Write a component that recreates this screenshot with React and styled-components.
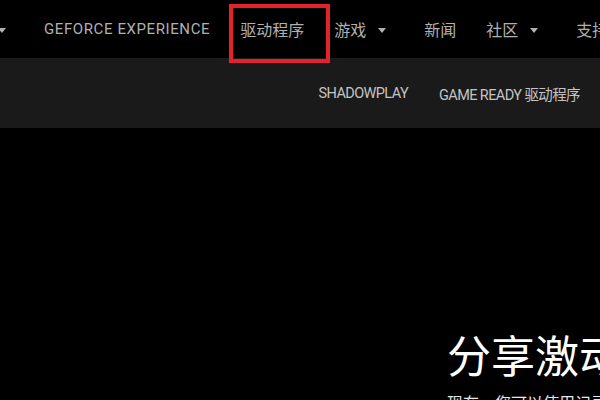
import React from 'react';
import styled, { createGlobalStyle } from 'styled-components';

const Global = createGlobalStyle`
  html, body {
    margin: 0;
    padding: 0;
    background: #000;
    overflow: hidden;
  }
  body {
    font-family: Roboto, "Noto Sans CJK SC", sans-serif;
  }
`;

const Page = styled.div`
  width: 600px;
  height: 400px;
  background: #000;
  overflow: hidden;
`;

const TopNav = styled.nav`
  height: 58px;
  background: #000;
  display: flex;
  align-items: center;
  gap: 30px;
  margin-left: -2px;
  white-space: nowrap;
`;

const NavItem = styled.a`
  position: relative;
  display: flex;
  align-items: center;
  gap: 12px;
  padding-right: ${p => (p.$caret ? 8 : 0)}px;
  color: #b0b0b0;
  font-size: ${p => (p.$latin ? 15 : 16)}px;
  letter-spacing: ${p => (p.$latin ? 0.6 : 0)}px;
  text-decoration: none;
`;

const Caret = styled.span`
  width: 0;
  height: 0;
  border-left: 4px solid transparent;
  border-right: 4px solid transparent;
  border-top: 5px solid #b0b0b0;
  margin-top: 2px;
`;

const Highlight = styled.span`
  position: absolute;
  left: -11px;
  top: -13px;
  width: 101px;
  height: 59px;
  box-sizing: border-box;
  border: 4px solid #e3232b;
  pointer-events: none;
`;

const SubNav = styled.div`
  height: 70px;
  background: #1a1a1a;
  display: flex;
  align-items: center;
  justify-content: flex-end;
  gap: 31px;
  padding-right: 20px;
  white-space: nowrap;
`;

const SubItem = styled.a`
  color: #c4c4c4;
  font-size: 14.5px;
  letter-spacing: -0.6px;
  text-decoration: none;
`;

const Hero = styled.section`
  padding: 200px 0 0 447px;
  display: flex;
  flex-direction: column;
  white-space: nowrap;
`;

const Title = styled.h1`
  margin: 0;
  color: #fff;
  font-family: "Noto Sans CJK SC", sans-serif;
  font-weight: 400;
  font-size: 44px;
  line-height: 52px;
`;

const Lead = styled.p`
  margin: 10px 0 0;
  color: #e6e6e6;
  font-family: "Noto Sans CJK SC", sans-serif;
  font-size: 16px;
  line-height: 24px;
`;

export default function App() {
  return (
    <Page>
      <Global />
      <TopNav>
        <NavItem $caret><Caret /></NavItem>
        <NavItem $latin>GEFORCE EXPERIENCE</NavItem>
        <NavItem>
          驱动程序
          <Highlight />
        </NavItem>
        <NavItem $caret>游戏<Caret /></NavItem>
        <NavItem>新闻</NavItem>
        <NavItem $caret>社区<Caret /></NavItem>
        <NavItem>支持</NavItem>
      </TopNav>
      <SubNav>
        <SubItem>SHADOWPLAY</SubItem>
        <SubItem>GAME READY 驱动程序</SubItem>
      </SubNav>
      <Hero>
        <Title>分享激动时刻</Title>
        <Lead>现在，您可以使用记录和分享功能捕捉精彩瞬间</Lead>
      </Hero>
    </Page>
  );
}
